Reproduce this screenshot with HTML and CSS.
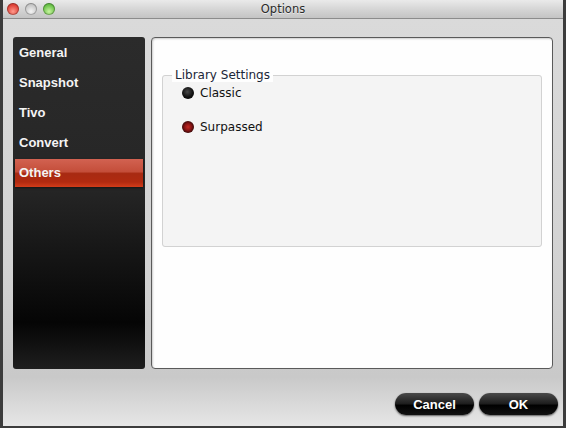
FILE: index.html
```html
<!DOCTYPE html>
<html lang="en">
<head>
    <meta charset="UTF-8">
    <title>Options</title>
    <link rel="stylesheet" href="styles.css">
</head>
<body>

    <div class="window">
        <div class="titlebar">
            <div class="lights">
                <span class="light red"></span>
                <span class="light gray"></span>
                <span class="light green"></span>
            </div>
            <div class="title">Options</div>
        </div>

        <div class="window-body">
            <div class="panes">
                <!-- Category list -->
                <div class="sidebar">
                    <div class="item">General</div>
                    <div class="item">Snapshot</div>
                    <div class="item">Tivo</div>
                    <div class="item">Convert</div>
                    <div class="item active">Others</div>
                </div>

                <!-- Settings -->
                <div class="content">
                    <fieldset class="group">
                        <legend>Library Settings</legend>
                        <label class="radio"><span class="dot"></span>Classic</label>
                        <label class="radio"><span class="dot checked"></span>Surpassed</label>
                    </fieldset>
                </div>
            </div>

            <div class="actions">
                <button class="pill">Cancel</button>
                <button class="pill">OK</button>
            </div>
        </div>
    </div>

</body>
</html>
```

FILE: styles.css
```css
body {
    margin: 0;
    padding: 0;
    background-color: #3c3c3c;
    font-family: "DejaVu Sans", sans-serif;
    width: 566px;
    height: 428px;
    overflow: hidden;
}
.window {
    margin: 0 3px;
    height: 426px;
    display: flex;
    flex-direction: column;
    background-color: #d6d6d6;
}
.titlebar {
    position: relative;
    height: 18px;
    border-bottom: 1px solid #8c8c8c;
    background: linear-gradient(#eaeaea, #d2d2d2 60%, #c4c4c4);
    display: flex;
    align-items: center;
    justify-content: center;
}
.lights {
    position: absolute;
    left: 4px;
    top: 3px;
    display: flex;
    gap: 6px;
}
.light {
    width: 12px;
    height: 12px;
    border-radius: 50%;
    box-shadow: inset 0 0 0 1px rgba(0, 0, 0, 0.25);
}
.red { background: radial-gradient(circle at 50% 70%, #ff9a8c, #e0443a 60%, #b52a22); }
.gray { background: radial-gradient(circle at 50% 70%, #f4f4f4, #c8c8c8 60%, #a0a0a0); }
.green { background: radial-gradient(circle at 50% 70%, #c8f4a0, #6cc34a 60%, #3f8f2a); }
.title {
    font-size: 11.5px;
    color: #2a2a2a;
    text-shadow: 0 1px 0 rgba(255, 255, 255, 0.6);
}
.window-body {
    flex: 1;
    display: flex;
    flex-direction: column;
    padding: 18px 10px 11px 10px;
    background: linear-gradient(#dadada 0%, #d2d2d2 60%, #c9c9c9 88%, #e6e6e6 100%);
}
.panes {
    display: flex;
    gap: 6px;
    height: 332px;
}
.sidebar {
    width: 132px;
    border-radius: 3px;
    background: linear-gradient(#2b2b2b 0%, #262626 45%, #050505 86%, #1e1e1e 100%);
}
.item {
    height: 28px;
    line-height: 28px;
    margin: 2px 2px 0 2px;
    padding-left: 4px;
    font-family: "Liberation Sans", Arial, sans-serif;
    font-size: 13px;
    font-weight: bold;
    color: #f4f4f4;
}
.item.active {
    background: linear-gradient(#d26251 0%, #c44e3a 45%, #a82a12 52%, #b02a10 82%, #d23c1a 100%);
    box-shadow: 0 1px 2px rgba(0, 0, 0, 0.5);
}
.content {
    flex: 1;
    background-color: #fefefe;
    border: 1px solid #5a5a5a;
    border-radius: 4px;
    box-shadow: inset 1px 1px 2px rgba(0, 0, 0, 0.2);
    padding: 31px 10px 0 10px;
}
.group {
    margin: 0;
    height: 178px;
    box-sizing: border-box;
    border: 1px solid #d2d2d2;
    border-radius: 3px;
    background-color: #f4f4f4;
    padding: 1px 0 0 9px;
}
.group legend {
    font-size: 12px;
    color: #1a2638;
    background-color: #fefefe;
    padding: 0 3px;
    line-height: 13px;
}
.radio {
    display: flex;
    align-items: center;
    gap: 6px;
    height: 20px;
    margin: 0 0 14px 10px;
    font-size: 12px;
    color: #111;
}
.dot {
    width: 12px;
    height: 12px;
    border-radius: 50%;
    background: radial-gradient(circle at 45% 40%, #4a4a4a, #111 55%, #000);
}
.dot.checked {
    background: radial-gradient(circle at 50% 50%, #c42822, #8a1414 40%, #2a0606 78%, #120202);
}
.actions {
    margin-top: 24px;
    margin-right: -5px;
    display: flex;
    justify-content: flex-end;
    gap: 5px;
}
.pill {
    width: 79px;
    height: 22px;
    border: none;
    border-radius: 11px;
    background: linear-gradient(#4a4a4a 0%, #1c1c1c 50%, #000 55%, #111 100%);
    box-shadow: 0 1px 2px rgba(0, 0, 0, 0.6);
    color: #fff;
    font-family: "Liberation Sans", Arial, sans-serif;
    font-size: 13px;
    font-weight: bold;
    padding: 0;
    cursor: pointer;
}
```
